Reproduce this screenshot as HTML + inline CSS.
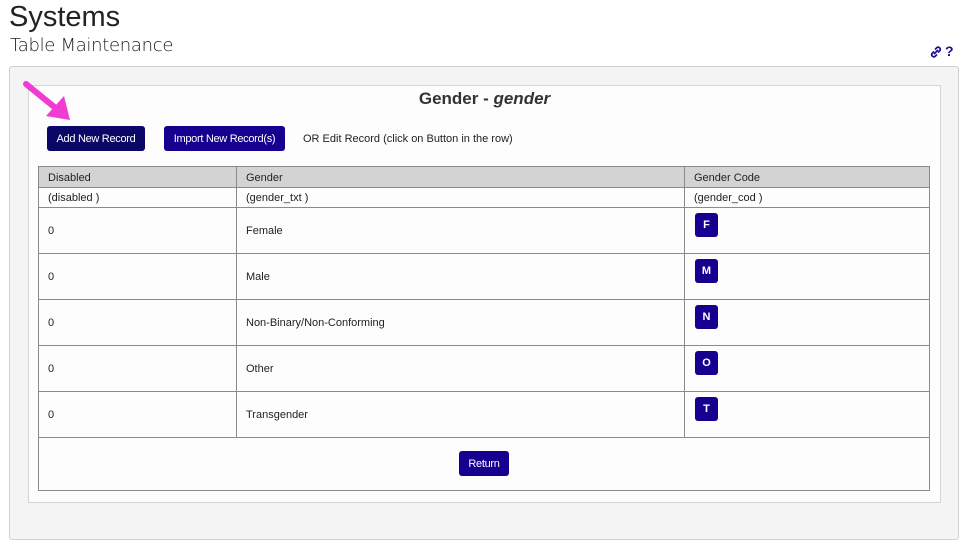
<!DOCTYPE html>
<html><head><meta charset="utf-8"><style>
body{margin:0;width:966px;height:542px;background:#fff;position:relative;overflow:hidden;font-family:"Liberation Sans",Arial,sans-serif;color:#222}
.a{position:absolute}
.h1{left:9px;top:1px;font-size:29px;color:#222;font-family:"Liberation Sans",sans-serif;font-weight:normal}
.h2{left:10px;top:35px;font-size:18px;color:#222;font-family:"DejaVu Sans","Liberation Sans",sans-serif;font-weight:300;letter-spacing:-0.3px}
.outer{left:9px;top:66px;width:948px;height:472px;background:#f4f4f4;border:1px solid #d0d0d0;border-radius:3px}
.inner{left:28px;top:85px;width:911px;height:416px;background:#fdfdfd;border:1px solid #d4d4d4}
.btn{position:absolute;background:#15008f;color:#fff;font-size:11px;border-radius:3px;text-align:center;letter-spacing:-0.3px}
table{position:absolute;left:38px;top:166px;width:892px;border-collapse:collapse;font-size:11px}
td{border:1px solid #8a8a8a;padding:1px 0 0 9px;vertical-align:middle;position:relative}
tr.hd td{background:#d3d3d3;height:19px}
tr.ds td{height:18px}
tr.r td{height:44px}
.cb{position:absolute;left:10px;top:5px;width:23px;height:24px;line-height:24px;background:#15008f;color:#fff;border-radius:3px;text-align:center;font-weight:bold;font-size:11px;padding:0}
</style></head><body>
<div class="a h1">Systems</div>
<div class="a h2">Table Maintenance</div>
<svg class="a" style="left:929px;top:45px" width="14" height="14" viewBox="0 0 14 14"><g fill="none" stroke="#1a0f8a" stroke-width="1.7"><path d="M6 4.5l2-2a2.2 2.2 0 0 1 3 3l-2 2"/><path d="M8 9.5l-2 2a2.2 2.2 0 0 1-3-3l2-2"/><path d="M5 9l4-4"/></g></svg>
<div class="a" style="left:945px;top:43px;font-size:14px;font-weight:bold;color:#1a0f8a">?</div>
<div class="a outer"></div>
<div class="a inner"></div>
<div class="a" style="left:28px;top:89px;width:913px;text-align:center;font-size:17px;font-weight:bold;color:#333">Gender - <i>gender</i></div>
<svg class="a" style="left:20px;top:80px" width="55" height="44" viewBox="0 0 55 44"><path d="M6 4 L38 30" stroke="#f03cd2" stroke-width="6" stroke-linecap="round"/><path d="M26 36 L50 40 L44 16 Z" fill="#f03cd2"/></svg>
<div class="btn" style="left:47px;top:126px;width:98px;height:25px;line-height:26px;background:#0b0766">Add New Record</div>
<div class="btn" style="left:164px;top:126px;width:121px;height:25px;line-height:26px">Import New Record(s)</div>
<div class="a" style="left:303px;top:133px;font-size:11px">OR Edit Record (click on Button in the row)</div>
<table>
<colgroup><col style="width:198px"><col style="width:448px"><col></colgroup>
<tr class="hd"><td>Disabled</td><td>Gender</td><td>Gender Code</td></tr>
<tr class="ds"><td>(disabled )</td><td>(gender_txt )</td><td>(gender_cod )</td></tr>
<tr class="r"><td>0</td><td>Female</td><td><div class="cb">F</div></td></tr>
<tr class="r"><td>0</td><td>Male</td><td><div class="cb">M</div></td></tr>
<tr class="r"><td>0</td><td>Non-Binary/Non-Conforming</td><td><div class="cb">N</div></td></tr>
<tr class="r"><td>0</td><td>Other</td><td><div class="cb">O</div></td></tr>
<tr class="r"><td>0</td><td>Transgender</td><td><div class="cb">T</div></td></tr>
<tr><td colspan="3" style="height:51px"></td></tr>
</table>
<div class="btn" style="left:459px;top:451px;width:50px;height:25px;line-height:26px">Return</div>
</body></html>
